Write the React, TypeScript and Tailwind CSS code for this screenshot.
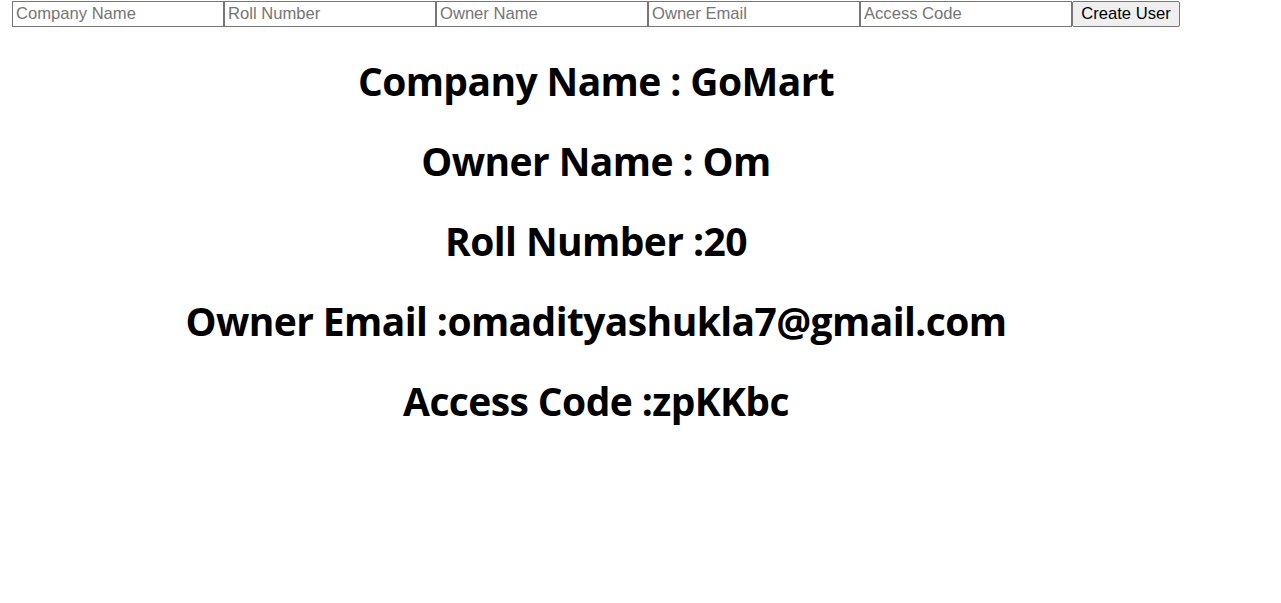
import { useState } from "react";

const fields = [
  "Company Name",
  "Roll Number",
  "Owner Name",
  "Owner Email",
  "Access Code",
];

export default function App() {
  const [values, setValues] = useState<Record<string, string>>({});

  const user = {
    company: "GoMart",
    owner: "Om",
    roll: "20",
    email: "omadityashukla7@gmail.com",
    code: "zpKKbc",
  };

  return (
    <div className="min-h-screen bg-white text-black">
      <div className="inline-flex flex-col ml-[12px] pt-[1px]">
        {/* form row */}
        <div className="flex" style={{ fontFamily: '"Liberation Sans", Arial, sans-serif' }}>
          {fields.map((f) => (
            <input
              key={f}
              placeholder={f}
              value={values[f] ?? ""}
              onChange={(e) => setValues({ ...values, [f]: e.target.value })}
              className="w-[212px] h-[26px] border border-[#767676] px-[3px] text-[16.6px] leading-[18px] placeholder:text-[#757575] outline-none"
            />
          ))}
          <button className="w-[108px] h-[26px] border border-[#767676] rounded-[2px] bg-[#efefef] text-[16.6px] leading-[18px] text-black">
            Create User
          </button>
        </div>

        {/* details */}
        <div className="flex flex-col items-center mt-[30px] gap-[32px] font-['Open_Sans',sans-serif] font-bold text-[39px] leading-[48px] tracking-[-0.6px]">
          <h1>Company Name : {user.company}</h1>
          <h1>Owner Name : {user.owner}</h1>
          <h1>Roll Number :{user.roll}</h1>
          <h1>Owner Email :{user.email}</h1>
          <h1>Access Code :{user.code}</h1>
        </div>
      </div>
    </div>
  );
}
